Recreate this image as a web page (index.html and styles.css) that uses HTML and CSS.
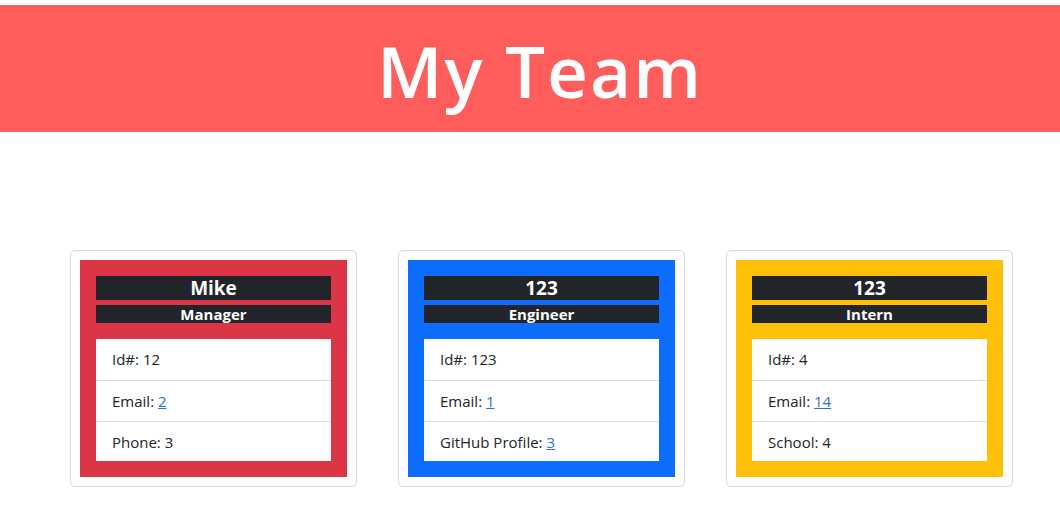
FILE: index.html
```html
<!DOCTYPE html>
<html lang="en">
<head>
<meta charset="utf-8">
<title>My Team</title>
<link rel="stylesheet" href="styles.css">
</head>
<body>
<header class="banner">
  <h1 class="banner-title">My Team</h1>
</header>
<main class="team">
  <section class="card">
    <div class="card-inner bg-manager">
      <h2 class="name">Mike</h2>
      <h3 class="role">Manager</h3>
      <ul class="list">
        <li class="item">Id#: 12</li>
        <li class="item">Email: <a href="#">2</a></li>
        <li class="item">Phone: 3</li>
      </ul>
    </div>
  </section>
  <section class="card">
    <div class="card-inner bg-engineer">
      <h2 class="name">123</h2>
      <h3 class="role">Engineer</h3>
      <ul class="list">
        <li class="item">Id#: 123</li>
        <li class="item">Email: <a href="#">1</a></li>
        <li class="item">GitHub Profile: <a href="#">3</a></li>
      </ul>
    </div>
  </section>
  <section class="card">
    <div class="card-inner bg-intern">
      <h2 class="name">123</h2>
      <h3 class="role">Intern</h3>
      <ul class="list">
        <li class="item">Id#: 4</li>
        <li class="item">Email: <a href="#">14</a></li>
        <li class="item">School: 4</li>
      </ul>
    </div>
  </section>
</main>
</body>
</html>
```
FILE: styles.css
```css
* { box-sizing: border-box; }
body {
  margin: 0;
  padding-top: 5px;
  font-family: "Open Sans", "Noto Sans", sans-serif;
  color: #212529;
  background: #fff;
}
.banner {
  background: #ff5c5c;
  height: 127px;
  display: flex;
  align-items: center;
  justify-content: center;
  padding-left: 20px;
}
.banner-title {
  margin: 0;
  color: #fff;
  font-size: 71px;
  font-weight: 600;
  line-height: 1;
  letter-spacing: 2px;
  padding-top: 4px;
}
.team {
  display: flex;
  gap: 41px;
  padding: 118px 0 0 70px;
}
.card {
  width: 287px;
  border: 1px solid #d9d9d9;
  border-radius: 5px;
  padding: 9px;
}
.card-inner {
  padding: 16px;
}
.bg-manager { background: #dc3545; }
.bg-engineer { background: #0d6efd; }
.bg-intern { background: #ffc107; }
.name {
  margin: 0;
  background: #212529;
  color: #fff;
  text-align: center;
  font-size: 19px;
  font-weight: 700;
  line-height: 24px;
  height: 24px;
}
.role {
  margin: 5px 0 0;
  background: #212529;
  color: #fff;
  text-align: center;
  font-size: 15px;
  font-weight: 700;
  line-height: 18px;
  height: 18px;
}
.list {
  list-style: none;
  margin: 16px 0 0;
  padding: 0;
  background: #fff;
}
.item {
  padding: 8px 16px;
  font-size: 15px;
  line-height: 24px;
  height: 41px;
  border-top: 1px solid #dfdfdf;
}
.item:first-child { border-top: none; height: 41px; }
.item:last-child { height: 40px; }
.item a { color: #2f6fd6; text-decoration: underline; }
```
